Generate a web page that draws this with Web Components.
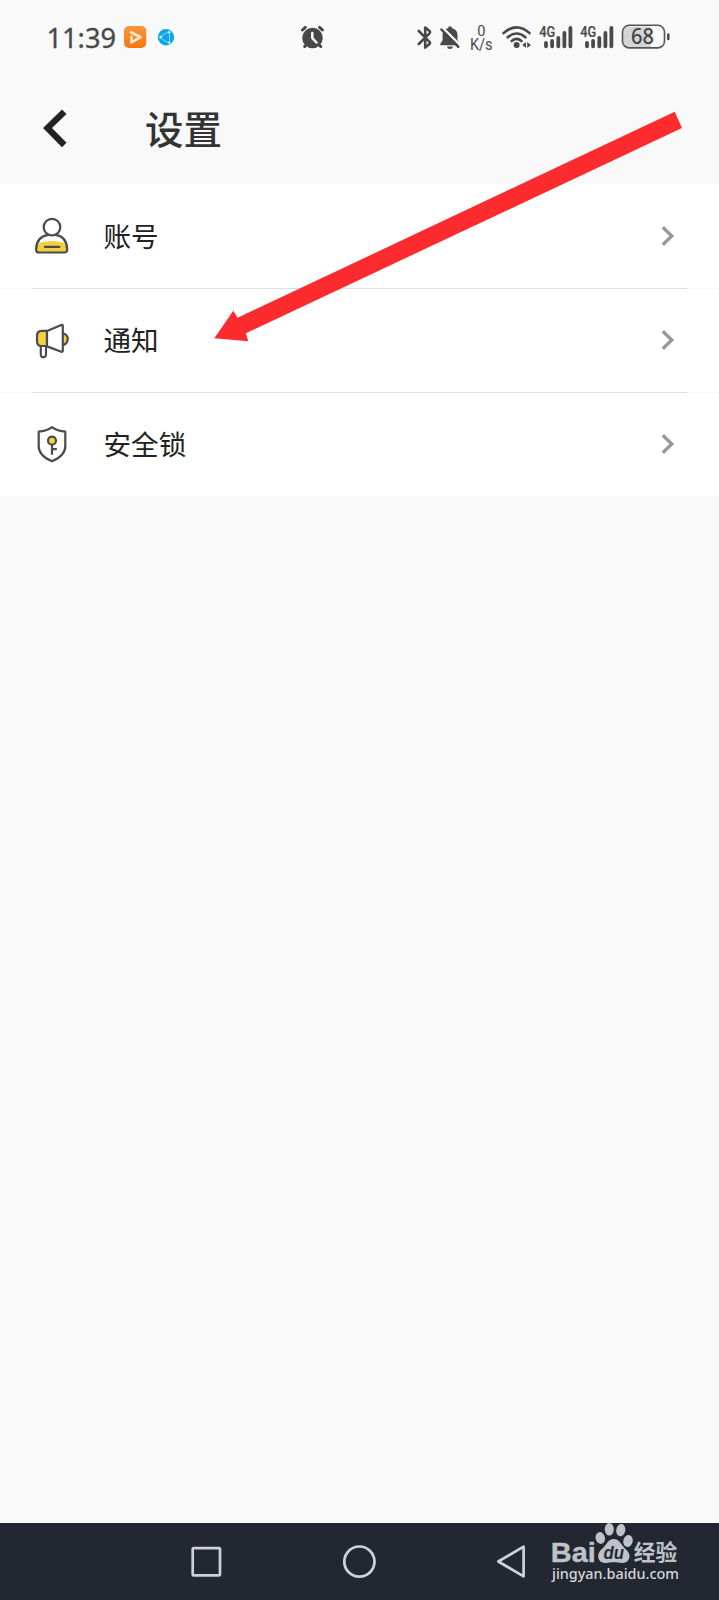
<!DOCTYPE html>
<html lang="zh-CN">
<head>
<meta charset="utf-8">
<title>设置</title>
<style>
html,body{margin:0;height:100%}
body{background:#f9f9f9;font-family:"Noto Sans","Noto Sans CJK SC",sans-serif}
</style>
</head>
<body>
<settings-screen></settings-screen>
<script>
const define = (name, html) => customElements.define(name, class extends HTMLElement {
  constructor() {
    super();
    const t = document.createElement('template');
    t.innerHTML = html;
    this.attachShadow({mode: 'open'}).appendChild(t.content.cloneNode(true));
  }
});

customElements.define('signal-bars', class extends HTMLElement {
  constructor() {
    super();
    this.attachShadow({mode: 'open'}).innerHTML = `
    <style>:host{display:block;width:34px;height:72px}svg{display:block}text{font:500 14px Roboto,sans-serif}</style>
    <svg width="34" height="72" viewBox="539 0 34 72" fill="#4a4a4a">
      <text x="539.3" y="36.8" textLength="16" lengthAdjust="spacingAndGlyphs" stroke="#4a4a4a" stroke-width=".2">4G</text>
      <path d="M546 43V46.3M552.1 41V46.3M558.3 37.8V46.3M564.4 33V46.3M570.4 28V46.3" stroke="#4a4a4a" stroke-width="3.8" stroke-linecap="round"/>
    </svg>`;
  }
});

define('status-bar', `
<style>
:host{display:flex;height:72px;box-sizing:border-box;padding-left:46px}
svg{display:block;flex:none;height:72px}
text{font-family:"Noto Sans",sans-serif}
.orange{margin-left:6px}.blue{margin-left:10px}.alarm{margin-left:124px}
.bt{margin-left:90px}.bell{margin-left:7px}.speed{margin-left:8px}.wifi{margin-left:7px}
.speed text{font-family:Roboto,sans-serif}
.s1{margin-left:6px}.s2{margin-left:7px}.bat{margin-left:7px}
signal-bars{flex:none}
</style>
<svg width="72" viewBox="46 0 72 72"><text x="46.5" y="48" font-size="27.5" fill="#484848" stroke="#484848" stroke-width=".3" textLength="69.5" lengthAdjust="spacingAndGlyphs">11:39</text></svg>
<svg class="orange" width="23" viewBox="124 0 23 72"><defs><linearGradient id="o" x1="0" y1="0" x2="0" y2="1"><stop stop-color="#f8963f"/><stop offset="1" stop-color="#f87510"/></linearGradient></defs><rect x="124" y="26" width="22.3" height="22" rx="5" fill="url(#o)"/><path d="M131 32.3L140.5 37.2L131.5 42.3V36.8" fill="none" stroke="#ffe9c8" stroke-width="2.7" stroke-linecap="round" stroke-linejoin="round"/></svg>
<svg class="blue" width="20" viewBox="157 0 20 72"><circle cx="166" cy="37.3" r="8.2" fill="#0ca5ec"/><path d="M158.8 37.2L169.5 31.3V43.5Z" fill="none" stroke="#8cdcff" stroke-width=".9"/><g fill="#c9f0ff"><circle cx="161" cy="37" r="1.2"/><circle cx="169.3" cy="32.2" r="1.2"/><circle cx="169.3" cy="42.6" r="1.2"/></g></svg>
<svg class="alarm" width="26" viewBox="301 0 26 72"><g stroke="#484848" stroke-width="3" stroke-linecap="round"><path d="M302.5 30L305.3 27.4M322.4 30L319.6 27.4M304.7 46.5L308 43M320.7 46.5L317 43"/></g><circle cx="312.5" cy="38" r="10.3" fill="#484848"/><path d="M312.3 33V38.2L316.5 42.5" fill="none" stroke="#f9f9f9" stroke-width="2.5" stroke-linecap="round" stroke-linejoin="round"/></svg>
<svg class="bt" width="15" viewBox="417 0 15 72"><path d="M418.8 31L429.5 41.8Q430.7 43 429.2 44.3L425.2 47.6V27.6L429.2 30.8Q430.7 32 429.5 33.3L418.8 44" fill="none" stroke="#484848" stroke-width="2.6" stroke-linecap="round" stroke-linejoin="round"/></svg>
<svg class="bell" width="22" viewBox="439 0 22 72"><path d="M440.3 45.3V43.8L442.6 40.3V35C442.6 30.5 445 28.8 448 28.3C448 25.6 452 25.6 452 28.3C455.2 29 457.5 31 457.5 35.2V40.3L460 43.8V45.3ZM447 46.5H453Q452.6 49 450 49Q447.3 49 447 46.5Z" fill="#484848"/><path d="M442.2 27.2L461 46" stroke="#f9f9f9" stroke-width="2.3"/><path d="M441.3 29.5L458.3 46.8" stroke="#484848" stroke-width="2.4" stroke-linecap="round"/></svg>
<svg class="speed" width="25" viewBox="469 0 25 72" fill="#4b4b4b"><text x="477.3" y="36" font-size="15.3" textLength="8.2" lengthAdjust="spacingAndGlyphs">0</text><text x="469.9" y="50" font-size="15.8" textLength="22.8" lengthAdjust="spacingAndGlyphs">K/s</text></svg>
<svg class="wifi" width="32" viewBox="501 0 32 72"><g fill="none" stroke="#484848" stroke-width="2.6" stroke-linecap="round"><path d="M503.5 33.1Q516.5 21.5 529.6 33.1M507.7 37.3Q516.6 29.7 525.4 37.3M511.7 41Q516.6 36.8 521.5 41"/></g><circle cx="516.6" cy="45" r="3" fill="#484848"/><path d="M526 42V48L522.3 45ZM527.2 42V48L530.9 45Z" fill="#484848"/></svg>
<signal-bars class="s1"></signal-bars><signal-bars class="s2"></signal-bars>
<svg class="bat" width="50" viewBox="621 0 50 72"><path d="M629 26.5H650.7V47.5H629Q623 47.5 623 41V33Q623 26.5 629 26.5Z" fill="#d5d5d5"/><rect x="622.5" y="25.3" width="42" height="22.6" rx="6.7" fill="none" stroke="#555" stroke-width="1.6"/><path d="M668.3 34.5V39" stroke="#484848" stroke-width="2.5" stroke-linecap="round"/><text x="631" y="44.2" font-size="20.8" font-weight="500" fill="#444" textLength="23" lengthAdjust="spacingAndGlyphs">68</text></svg>
`);

define('title-bar', `
<style>
:host{display:flex;align-items:center;height:112px;box-sizing:border-box;padding-left:43px;color:#333}
svg{display:block;width:24px;height:38px}
h1{margin:0 0 3px 78px;font:500 38.5px/58px "Noto Sans CJK SC",sans-serif}
</style>
<svg viewBox="43 109 24 38"><path d="M43.3 128L62 109.8L66.3 114L51.7 128L66.3 142.7L62 147Z" fill="#222" stroke="#222" stroke-width=".5"/></svg>
<h1><slot></slot></h1>`);

define('settings-row', `
<style>
:host{display:flex;align-items:center;height:104px;box-sizing:border-box;padding:0 44px 0 34px;background:#fff;color:#222}
.label{flex:1;margin:0 0 3px 33.5px;font:400 27.6px/40px "Noto Sans CJK SC",sans-serif}
svg{display:block;width:14px;height:22px}
</style>
<slot name="icon"></slot><div class="label"><slot></slot></div>
<svg viewBox="0 0 14 22"><path d="M1.8 2.2L10.8 11L1.8 19.8" fill="none" stroke="#999" stroke-width="3.3"/></svg>`);

define('row-divider', `<style>:host{display:block;height:1px;margin:0 0 -1px;background:linear-gradient(90deg,#f8f8f8 32px,#dedede 32px,#dedede 687px,#f8f8f8 687px);position:relative}</style>`);

const rowIcon = (name, body) => define(name, `<style>:host{display:block;flex:none;width:36px;height:40px}svg{display:block;fill:none;stroke:#4a4b50;stroke-width:2.2;stroke-linejoin:round;stroke-linecap:round}</style><svg width="36" height="40" viewBox="0 0 36 40">${body}</svg>`);

rowIcon('account-icon', `<path d="M3 29Q4 27.6 6.5 26.5Q18 23.5 29 26.5Q32 27.6 32.8 29L33 33.5Q33 36.5 30.5 36.5H4.5Q2 36.5 2 34Z" fill="#f2cf3c" stroke="none"/><circle cx="18" cy="11.2" r="8.3"/><path d="M14 18.8C6.5 20.2 2.2 24.7 2.1 33.2Q2.1 36.5 4.8 36.5H30.4Q33.2 36.5 33.2 33.2C33 24.7 29 20.2 22 18.8"/><path d="M10.8 30.8H25.4"/>`);
rowIcon('megaphone-icon', `<g transform="translate(0 -.9)"><path d="M28.5 14.2C35.5 14.6 35.5 25.4 28.5 25.7" fill="#f2cf3c"/><path d="M13 11.8H7.5Q3 11.8 3 17V22Q3 27 7.5 27H13Z" fill="#f8d336"/><path d="M13 11.8L27.3 5.8Q28.8 5.3 28.8 7V31.5Q28.8 33.2 27.3 32.7L13 27.3Z" fill="#fff"/><path d="M6.8 28V35.2Q6.8 38.2 9.3 38.2Q12 38.2 12 35.2V28" fill="#fff"/></g>`);
rowIcon('shield-icon', `<path d="M18 3.2Q23.5 7.3 31.3 7.7V22Q31.3 31.8 18 37.3Q4.7 31.8 4.7 22V7.7Q12.5 7.3 18 3.2Z"/><circle cx="18" cy="16.7" r="4" fill="#f8d336"/><path d="M18 21V30M18 25.2H22"/>`);

define('pointer-arrow', `<style>:host{position:absolute;left:214px;top:110px;width:470px;height:234px;pointer-events:none}svg{display:block}</style>
<svg width="470" height="234" viewBox="214 110 470 234"><path d="M214.3 338.2L233.3 310.8L237.5 317.8L674.7 111.7L682 128L246 333.2L248.2 341.2Z" fill="#fc2c2e"/></svg>`);

define('baidu-mark', `
<style>:host{display:block;width:132px;height:77px}svg{display:block}</style>
<svg width="132" height="77" viewBox="549 1523 132 77" fill="#bfc3c9">
<text x="550.8" y="1561.8" font-family="Liberation Sans" font-size="28" font-weight="700" textLength="45" lengthAdjust="spacingAndGlyphs" stroke="#bfc3c9" stroke-width=".4">Bai</text>
<ellipse cx="600.3" cy="1538" rx="4.7" ry="6" transform="rotate(-12 600.3 1538)"/><ellipse cx="609.3" cy="1529.3" rx="4.5" ry="6.3"/><ellipse cx="620.8" cy="1530.2" rx="4.5" ry="6.2" transform="rotate(10 620.8 1530.2)"/><ellipse cx="628" cy="1541" rx="4.7" ry="6" transform="rotate(14 628 1541)"/>
<path d="M613.8 1539C619 1539 621 1544 624.5 1548C629 1552 631 1556 628.3 1560C625.5 1564.7 619 1562.3 613.8 1562.3C608.5 1562.3 602 1564.7 599.2 1560C596.8 1555.5 599 1551 603 1548C607 1544.3 608 1539 613.8 1539Z"/>
<text x="603.5" y="1559" font-family="Liberation Sans" font-size="18" font-weight="700" font-style="italic" fill="#242932" textLength="20.5" lengthAdjust="spacingAndGlyphs">du</text>
<text x="633.8" y="1560.2" font-family="Noto Sans CJK SC" font-size="21.8" font-weight="700" textLength="43.5" lengthAdjust="spacingAndGlyphs">经验</text>
<text x="552" y="1578.7" font-family="Noto Sans" font-size="14.2" font-weight="500" fill="#d3d6da" textLength="127" lengthAdjust="spacingAndGlyphs">jingyan.baidu.com</text>
</svg>`);

define('navigation-bar', `
<style>
:host{display:flex;height:77px;background:#222731;padding-left:190px}
svg{display:block;flex:none;fill:none;stroke:#cfd1d6;stroke-width:2.7;stroke-linejoin:round}
.home{margin-left:120px}.back{margin-left:119px}baidu-mark{margin-left:23px}
</style>
<svg width="33" height="77" viewBox="190 1523 33 77"><rect x="192.7" y="1548.1" width="27.3" height="27.3" rx="1"/></svg>
<svg class="home" width="34" height="77" viewBox="343 1523 34 77"><circle cx="359.4" cy="1561.6" r="15.1"/></svg>
<svg class="back" width="30" height="77" viewBox="496 1523 30 77"><path d="M498.3 1561.5L523.6 1546.7V1576.3Z"/></svg>
<baidu-mark></baidu-mark>`);

define('settings-screen', `
<style>
:host{display:flex;flex-direction:column;position:relative;width:719px;height:1600px;background:#f9f9f9;overflow:hidden}
main{flex:1}
</style>
<status-bar></status-bar>
<title-bar>设置</title-bar>
<main>
<settings-row><account-icon slot="icon"></account-icon>账号</settings-row>
<row-divider></row-divider>
<settings-row><megaphone-icon slot="icon"></megaphone-icon>通知</settings-row>
<row-divider></row-divider>
<settings-row><shield-icon slot="icon"></shield-icon>安全锁</settings-row>
</main>
<navigation-bar></navigation-bar>
<pointer-arrow></pointer-arrow>`);
</script>
</body>
</html>
